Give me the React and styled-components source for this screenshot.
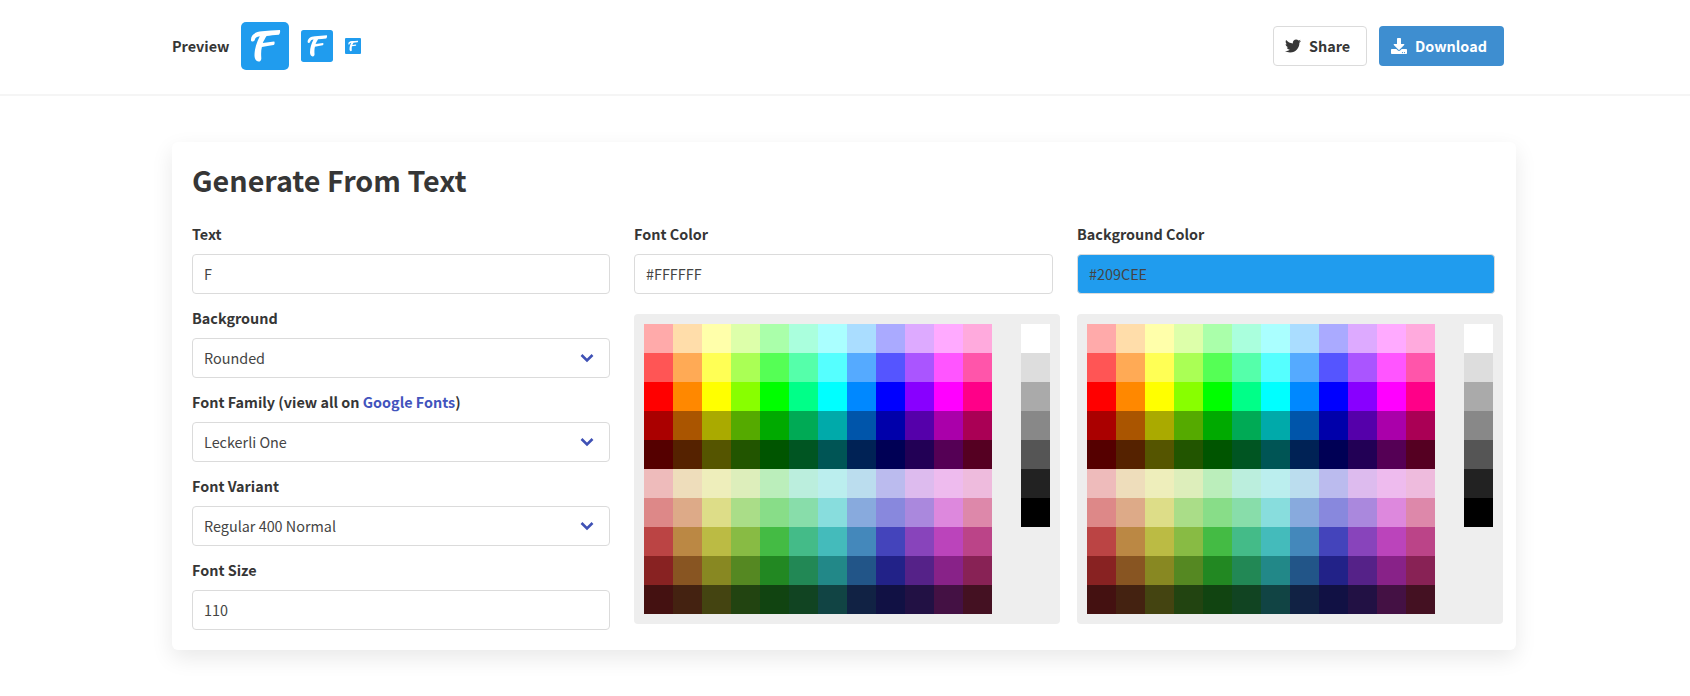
import React from 'react';
import styled, { createGlobalStyle } from 'styled-components';
import { FaTwitter, FaDownload } from 'react-icons/fa';

const Global = createGlobalStyle`
  html, body { margin: 0; padding: 0; background: #fff; }
  body {
    font-family: "Noto Sans CJK SC", "Noto Sans", sans-serif;
    font-size: 14.4px;
    color: #363636;
  }
`;

const Header = styled.header`
  height: 94px;
  box-sizing: content-box;
  border-bottom: 2px solid #f5f5f5;
  padding: 0 186px 0 172px;
  display: flex;
  align-items: center;
  justify-content: space-between;
  & > * { margin-top: -2px; }
`;
const PreviewRow = styled.div`
  display: flex;
  align-items: center;
  gap: 12px;
`;
const PreviewLabel = styled.span`
  font-weight: 700;
  font-size: 14.4px;
  width: 57px;
  padding-bottom: 2px;
`;
const Logo = styled.svg`
  display: block;
  width: ${p => p.$size}px;
  height: ${p => p.$size}px;
`;
const Actions = styled.div`
  display: flex;
  gap: 12px;
`;
const Button = styled.button`
  height: 40px;
  box-sizing: border-box;
  display: flex;
  align-items: center;
  justify-content: flex-start;
  gap: 8px;
  width: ${p => p.$w}px;
  font: 700 14.4px "Noto Sans CJK SC", "Noto Sans", sans-serif;
  border-radius: 4px;
  border: 1px solid ${p => (p.$primary ? 'transparent' : '#dbdbdb')};
  background: ${p => (p.$primary ? '#3e8ed0' : '#fff')};
  color: ${p => (p.$primary ? '#fff' : '#363636')};
  padding: 0 0 2px 11px;
  & > svg { margin-top: 2px; }
`;
const Main = styled.main`
  box-sizing: border-box;
  height: 600px;
  padding: 46px 0 0 172px;
`;
const Card = styled.section`
  width: 1344px;
  height: 508px;
  box-sizing: border-box;
  padding: 20px;
  background: #fff;
  border-radius: 6px;
  box-shadow: 0 8px 22px rgba(10, 10, 10, 0.09);
`;
const Title = styled.h1`
  margin: 0 0 25px;
  font-size: 28.7px;
  line-height: 36px;
  font-weight: 700;
  color: #363636;
`;
const Columns = styled.div`
  display: grid;
  grid-template-columns: 418px 419px 418px;
  column-gap: 24px;
`;
const Column = styled.div`
  min-width: 0;
`;
const Field = styled.div`
  height: 84px;
`;
const Label = styled.div`
  font-weight: 700;
  font-size: 14.4px;
  line-height: 22px;
  margin-bottom: 9px;
`;
const Link = styled.a`
  color: #4254bd;
  text-decoration: none;
`;
const Box = styled.div`
  height: 40px;
  box-sizing: border-box;
  border: 1px solid #dbdbdb;
  border-radius: 4px;
  padding: 0 11px 2px;
  display: flex;
  align-items: center;
  justify-content: space-between;
  background: ${p => p.$bg || '#fff'};
  font-size: 14.4px;
  color: #444;
`;
const Chevron = styled.svg`
  width: 16px;
  height: 10px;
  margin: 2px 3px 0 0;
  color: #3f51b5;
`;
const Panel = styled.div`
  width: 426px;
  height: 310px;
  box-sizing: border-box;
  margin-top: 20px;
  padding: 10px;
  background: #eee;
  border-radius: 4px;
  display: flex;
  gap: 29px;
`;
const Palette = styled.div`
  display: grid;
  grid-template-columns: repeat(12, 29px);
  grid-auto-rows: 29px;
  height: 290px;
`;
const Greys = styled.div`
  display: grid;
  grid-template-columns: 29px;
  grid-auto-rows: 29px;
  align-self: flex-start;
`;
const Swatch = styled.div`
  background: ${p => p.$c};
`;

const rows = [
  'faa fda ffa dfa afa afd aff adf aaf daf faf fad',
  'f55 fa5 ff5 af5 5f5 5fa 5ff 5af 55f a5f f5f f5a',
  'f00 f80 ff0 8f0 0f0 0f8 0ff 08f 00f 80f f0f f08',
  'a00 a50 aa0 5a0 0a0 0a5 0aa 05a 00a 50a a0a a05',
  '500 520 550 250 050 052 055 025 005 205 505 502',
  'ebb edb eeb deb beb bed bee bde bbe dbe ebe ebd',
  'd88 da8 dd8 ad8 8d8 8da 8dd 8ad 88d a8d d8d d8a',
  'b44 b84 bb4 8b4 4b4 4b8 4bb 48b 44b 84b b4b b48',
  '822 852 882 582 282 285 288 258 228 528 828 825',
  '411 421 441 241 141 142 144 124 114 214 414 412',
];
const palette = rows.flatMap(r => r.split(' ').map(c => `#${c}`));
const greys = ['#fff', '#ddd', '#aaa', '#888', '#555', '#222', '#000'];

const FLogo = ({ size, radius }) => (
  <Logo $size={size} viewBox="0 0 48 48">
    <rect width="48" height="48" rx={radius} fill="#209cee" />
    <path
      d="M10 18.5C9.5 13 14 9.8 21 9.3C27 8.8 33 8.3 38.7 8C39.5 8 39.2 12.3 37.8 12.7C33 13.1 29 13.5 25.6 13.9C24 16.5 22.7 18.6 21.8 21C25.5 20.5 29.5 19.8 33 19.4C34 19.4 33.8 22.6 32.6 23C28.5 23.6 24.5 24.3 20.9 25C20 28.5 20 32 20.3 36C20.5 38.5 19 39.8 17.5 39.6C15 39.3 13.6 37 13.5 33.8C13.4 27 15.7 20 18.8 14.3C15.7 14.7 14 16 13.6 18.5C12.6 19.9 10.4 20 10 18.5Z"
      fill="#fff"
    />
  </Logo>
);

const ChevronIcon = () => (
  <Chevron viewBox="0 0 16 10">
    <path d="M2.5 2l5.5 5.5 5.5-5.5" fill="none" stroke="currentColor" strokeWidth="2.6" />
  </Chevron>
);

const ColorPanel = () => (
  <Panel>
    <Palette>{palette.map((c, i) => <Swatch key={i} $c={c} />)}</Palette>
    <Greys>{greys.map(c => <Swatch key={c} $c={c} />)}</Greys>
  </Panel>
);

export default function App() {
  return (
    <>
      <Global />
      <Header>
        <PreviewRow>
          <PreviewLabel>Preview</PreviewLabel>
          <FLogo size={48} radius={5} />
          <FLogo size={32} radius={4} />
          <FLogo size={16} radius={3} />
        </PreviewRow>
        <Actions>
          <Button $w={94}><FaTwitter size={16} />Share</Button>
          <Button $w={125} $primary><FaDownload size={16} />Download</Button>
        </Actions>
      </Header>
      <Main>
        <Card>
          <Title>Generate From Text</Title>
          <Columns>
            <Column>
              <Field><Label>Text</Label><Box>F</Box></Field>
              <Field><Label>Background</Label><Box>Rounded<ChevronIcon /></Box></Field>
              <Field>
                <Label>Font Family (view all on <Link href="#">Google Fonts</Link>)</Label>
                <Box>Leckerli One<ChevronIcon /></Box>
              </Field>
              <Field><Label>Font Variant</Label><Box>Regular 400 Normal<ChevronIcon /></Box></Field>
              <Field><Label>Font Size</Label><Box>110</Box></Field>
            </Column>
            <Column>
              <Label>Font Color</Label>
              <Box>#FFFFFF</Box>
              <ColorPanel />
            </Column>
            <Column>
              <Label>Background Color</Label>
              <Box $bg="#209cee">#209CEE</Box>
              <ColorPanel />
            </Column>
          </Columns>
        </Card>
      </Main>
    </>
  );
}
